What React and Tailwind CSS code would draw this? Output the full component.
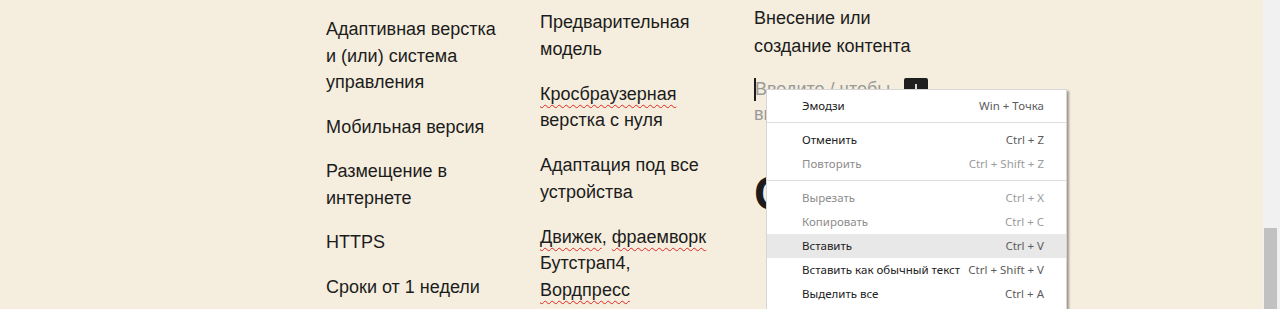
import React from "react";

const squiggle =
  "underline decoration-wavy decoration-[#e0261f] decoration-1 underline-offset-[4px]";

// Items of the three feature columns, one string per visual line
const col1 = [
  ["Адаптивная верстка", "и (или) система", "управления"],
  ["Мобильная версия"],
  ["Размещение в", "интернете"],
  ["HTTPS"],
  ["Сроки от 1 недели"],
];

const menuItems = [
  { label: "Эмодзи", keys: "Win + Точка" },
  { sep: true },
  { label: "Отменить", keys: "Ctrl + Z" },
  { label: "Повторить", keys: "Ctrl + Shift + Z", disabled: true },
  { sep: true },
  { label: "Вырезать", keys: "Ctrl + X", disabled: true },
  { label: "Копировать", keys: "Ctrl + C", disabled: true },
  { label: "Вставить", keys: "Ctrl + V", active: true },
  { label: "Вставить как обычный текст", keys: "Ctrl + Shift + V" },
  { label: "Выделить все", keys: "Ctrl + A" },
];

function Item({ lines }) {
  return (
    <div className="mb-[18px]">
      {lines.map((l, i) => (
        <div key={i} className="whitespace-nowrap">
          {l}
        </div>
      ))}
    </div>
  );
}

function ContextMenu() {
  return (
    <div
      className="absolute left-[766px] top-[89px] w-[301px] bg-white border border-[#d6d6d6] pt-[4px] pb-1 shadow-[2px_2px_2px_rgba(0,0,0,0.35)]"
      style={{ fontFamily: '"Noto Sans", "Open Sans", sans-serif' }}
    >
      {menuItems.map((it, i) =>
        it.sep ? (
          <div key={i} className="pt-[4px] pb-[5px]">
            <div className="h-px bg-[#dedede]" />
          </div>
        ) : (
          <div
            key={i}
            className={`flex items-center justify-between h-6 pl-[35px] pr-[22px] text-[11.5px] ${
              it.active ? "bg-[#e8e8e8]" : ""
            }`}
          >
            <span className={it.disabled ? "text-[#8c8c8c]" : "text-[#202020]"}>
              {it.label}
            </span>
            <span className={it.disabled ? "text-[#9b9b9b]" : "text-[#5c5c5c]"}>
              {it.keys}
            </span>
          </div>
        )
      )}
    </div>
  );
}

export default function App() {
  return (
    <div
      className="relative flex h-[309px] w-[1280px] overflow-hidden bg-[#f5eede] text-[#1c1c1c]"
      style={{ fontFamily: '"Liberation Sans", Arial, sans-serif' }}
    >
      <main className="flex flex-1 pl-[326px] text-[18px] leading-[26.5px]">
        {/* Column 1 */}
        <div className="w-[214px] pt-[16px]">
          {col1.map((lines, i) => (
            <Item key={i} lines={lines} />
          ))}
        </div>

        {/* Column 2 */}
        <div className="w-[214px] pt-[9px]">
          <div className="mb-[18.5px]">
            <div className="whitespace-nowrap">Предварительная</div>
            <div className="whitespace-nowrap">модель</div>
          </div>
          <div className="mb-[18.5px]">
            <div className="whitespace-nowrap">
              <span className={squiggle}>Кросбраузерная</span>
            </div>
            <div className="whitespace-nowrap">верстка с нуля</div>
          </div>
          <div className="mb-[18.5px]">
            <div className="whitespace-nowrap">Адаптация под все</div>
            <div className="whitespace-nowrap">устройства</div>
          </div>
          <div className="mb-[18.5px]">
            <div className="whitespace-nowrap">
              <span className={squiggle}>Движек</span>,{" "}
              <span className={squiggle}>фраемворк</span>
            </div>
            <div className="whitespace-nowrap">Бутстрап4,</div>
            <div className="whitespace-nowrap">
              <span className={squiggle}>Вордпресс</span>
            </div>
          </div>
        </div>

        {/* Column 3 */}
        <div className="w-[214px] pt-[5px]">
          <div className="mb-[17px] leading-[27.5px]">
            <div className="whitespace-nowrap">Внесение или</div>
            <div className="whitespace-nowrap">создание контента</div>
          </div>
          <div className="leading-[25px]">
            <div className="flex h-[25px] items-center">
              <span className="w-[2px] h-[23px] bg-[#1c1c1c] -mr-[1px]" />
              <span className="whitespace-nowrap text-[#9a9a9a]">Введите / чтобы</span>
              <button className="ml-[14px] flex h-[23px] w-6 items-center justify-center rounded-[2px] bg-[#1e1e1e] text-white">
                <svg width="14" height="14" viewBox="0 0 14 14">
                  <path d="M7 1v12M1 7h12" stroke="white" strokeWidth="1.6" />
                </svg>
              </button>
            </div>
            <div className="whitespace-nowrap text-[#9a9a9a]">выбрать блок</div>
          </div>
          <div className="mt-[38px] text-[48px] font-bold leading-[57px] whitespace-nowrap">
            Сайт
          </div>
        </div>
      </main>

      {/* Scrollbar */}
      <div className="w-[17px] shrink-0 bg-[#f1f1f1] pl-[1px] pt-[228px]">
        <div className="h-full w-[13px] bg-[#c1c1c1]" />
      </div>

      <ContextMenu />
    </div>
  );
}
